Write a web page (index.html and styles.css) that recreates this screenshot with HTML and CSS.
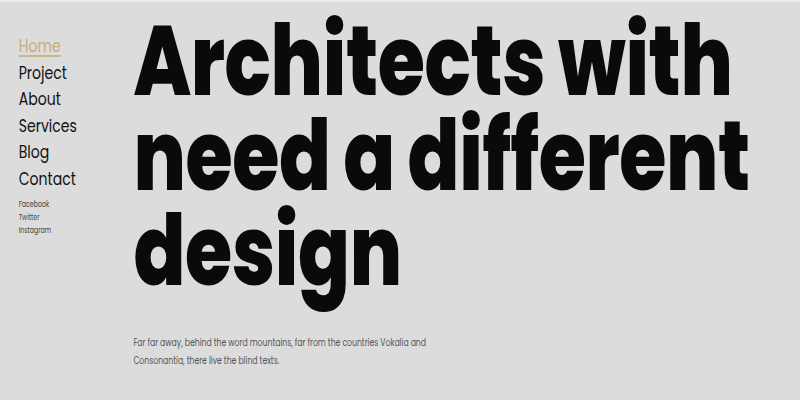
FILE: index.html
```html
<!DOCTYPE html>
<html>
<head>
<meta charset="utf-8">
<link rel="stylesheet" href="styles.css">
</head>
<body>
<div class="page">
  <aside class="side">
    <nav class="menu">
      <a class="item active">Home</a>
      <a class="item">Project</a>
      <a class="item">About</a>
      <a class="item">Services</a>
      <a class="item">Blog</a>
      <a class="item">Contact</a>
    </nav>
    <div class="social">
      <a>Facebook</a>
      <a>Twitter</a>
      <a>Instagram</a>
    </div>
  </aside>
  <main class="main">
    <h1 class="title">Architects with<br>need a different<br>design</h1>
    <p class="lead">Far far away, behind the word mountains, far from the countries Vokalia and Consonantia, there live the blind texts.</p>
  </main>
</div>
</body>
</html>
```
FILE: styles.css
```css
html, body { margin: 0; padding: 0; }
body {
  width: 800px; height: 400px; overflow: hidden;
  background: #dcdcdc;
  border-top: 2px solid #ececec;
  box-sizing: border-box;
  font-family: "Poppins", "Inter", "Noto Sans", sans-serif;
}
.page {
  display: flex;
  width: 1026px;
  transform: scaleX(0.78);
  transform-origin: 0 0;
}
.side { width: 171px; flex: none; padding: 31px 0 0 24px; box-sizing: border-box; }
.menu { display: flex; flex-direction: column; }
.item { font-size: 18px; line-height: 26.6px; color: #111; }
.item.active { color: #c9aa7c; align-self: flex-start; position: relative; }
.item.active::after { content: ""; position: absolute; left: 0; right: 0; bottom: 3px; height: 2px; background: #cfb38a; }
.social { display: flex; flex-direction: column; margin-top: 5px; }
.social a { font-size: 8px; line-height: 13px; color: #444; }
.main { padding-top: 11px; min-width: 0; }
.title {
  margin: 0; white-space: nowrap;
  font-size: 98px; font-weight: 800; line-height: 95px;
  letter-spacing: -0.45px; word-spacing: -2px; color: #0a0a0a;
}
.lead { margin: 36px 0 0; width: 420px; font-size: 9.9px; line-height: 18px; color: #555; }
```
